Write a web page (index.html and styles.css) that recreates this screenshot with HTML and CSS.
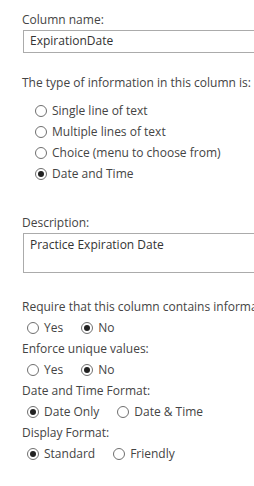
FILE: index.html
```html
<!DOCTYPE html>
<html>
<head>
	<title>Column settings</title>
	<link rel="stylesheet" href="styles.css">
</head>
<body>
	<div id="main">
		<div class="label first">Column name:</div>
		<div class="textbox">ExpirationDate</div>

		<div class="label type">The type of information in this column is:</div>
		<div class="options">
			<div class="opt"><span class="radio"></span>Single line of text</div>
			<div class="opt"><span class="radio"></span>Multiple lines of text</div>
			<div class="opt"><span class="radio"></span>Choice (menu to choose from)</div>
			<div class="opt"><span class="radio on"></span>Date and Time</div>
		</div>

		<div class="label desc">Description:</div>
		<div class="textbox area">Practice Expiration Date</div>

		<div class="label req">Require that this column contains information:</div>
		<div class="inline">
			<span class="opt"><span class="radio"></span>Yes</span>
			<span class="opt"><span class="radio on"></span>No</span>
		</div>
		<div class="label">Enforce unique values:</div>
		<div class="inline">
			<span class="opt"><span class="radio"></span>Yes</span>
			<span class="opt"><span class="radio on"></span>No</span>
		</div>
		<div class="label">Date and Time Format:</div>
		<div class="inline">
			<span class="opt"><span class="radio on"></span>Date Only</span>
			<span class="opt"><span class="radio"></span>Date &amp; Time</span>
		</div>
		<div class="label">Display Format:</div>
		<div class="inline">
			<span class="opt"><span class="radio on"></span>Standard</span>
			<span class="opt"><span class="radio"></span>Friendly</span>
		</div>
	</div>
</body>
</html>
```

FILE: styles.css
```css
body {
	margin: 0;
	background: white;
	overflow: hidden;
}
#main {
	width: 232px;
	padding: 9px 0 0 22px;
	overflow: hidden;
	font-family: "Open Sans", sans-serif;
	font-size: 12px;
	line-height: 21px;
	color: #444;
	white-space: nowrap;
}
.label {
	height: 21px;
}
.textbox {
	box-sizing: border-box;
	width: 300px;
	height: 23px;
	margin-left: 1px;
	border: 1px solid #ababab;
	padding: 0 6px;
	line-height: 20px;
	color: #333;
}
.textbox.area {
	height: 40px;
	line-height: 18px;
	padding-top: 2px;
}
.type {
	margin-top: 19px;
}
.options {
	margin-top: 7px;
	padding-left: 13px;
}
.options .opt {
	display: flex;
	align-items: center;
	height: 21px;
}
.desc {
	margin-top: 28px;
}
.req {
	margin-top: 23px;
}
.inline {
	display: flex;
	align-items: center;
	height: 21px;
	padding-left: 5px;
	gap: 18px;
}
.inline .opt {
	display: flex;
	align-items: center;
}
.radio {
	box-sizing: border-box;
	width: 12px;
	height: 12px;
	border: 1px solid #6f6f6f;
	border-radius: 50%;
	margin-right: 5px;
	display: flex;
	align-items: center;
	justify-content: center;
}
.radio.on::after {
	content: "";
	width: 6px;
	height: 6px;
	border-radius: 50%;
	background: #222;
}
```
